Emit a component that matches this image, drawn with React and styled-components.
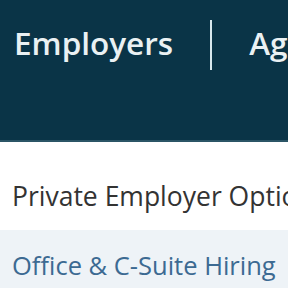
import React from "react";
import styled, { createGlobalStyle } from "styled-components";

const Global = createGlobalStyle`
  html, body { margin: 0; padding: 0; background: #fff; }
  body { font-family: "Open Sans", "Noto Sans", sans-serif; overflow: hidden; }
`;

const Page = styled.div`
  width: 288px;
  height: 288px;
  overflow: hidden;
  display: flex;
  flex-direction: column;
`;

const Header = styled.header`
  flex: none;
  background: #0a3447;
  border-bottom: 2px solid #2b5566;
  box-sizing: border-box;
  height: 142px;
  display: flex;
  align-items: flex-start;
  padding: 20px 0 0 14px;
  white-space: nowrap;
`;

const NavItem = styled.span`
  font-size: 31.5px;
  font-weight: 600;
  color: #eaf1f3;
  line-height: 50px;
  margin-top: -2px;
`;

const Divider = styled.span`
  flex: none;
  width: 2px;
  height: 50px;
  background: #d8e8ee;
  margin: 0 37px 0 37px;
`;

const Section = styled.div`
  flex: none;
  height: 88px;
  box-sizing: border-box;
  padding: 38px 0 0 12px;
  font-size: 26.5px;
  line-height: 32px;
  color: #333;
  white-space: nowrap;
`;

const Row = styled.div`
  flex: 1;
  background: #eef3f7;
  padding: 19px 0 0 12px;
  font-size: 25.5px;
  line-height: 32px;
  color: #3c6a92;
  white-space: nowrap;
`;

export default function App() {
  return (
    <Page>
      <Global />
      <Header>
        <NavItem>Employers</NavItem>
        <Divider />
        <NavItem>Agencies</NavItem>
      </Header>
      <Section>Private Employer Options</Section>
      <Row>Office &amp; C-Suite Hiring</Row>
    </Page>
  );
}
